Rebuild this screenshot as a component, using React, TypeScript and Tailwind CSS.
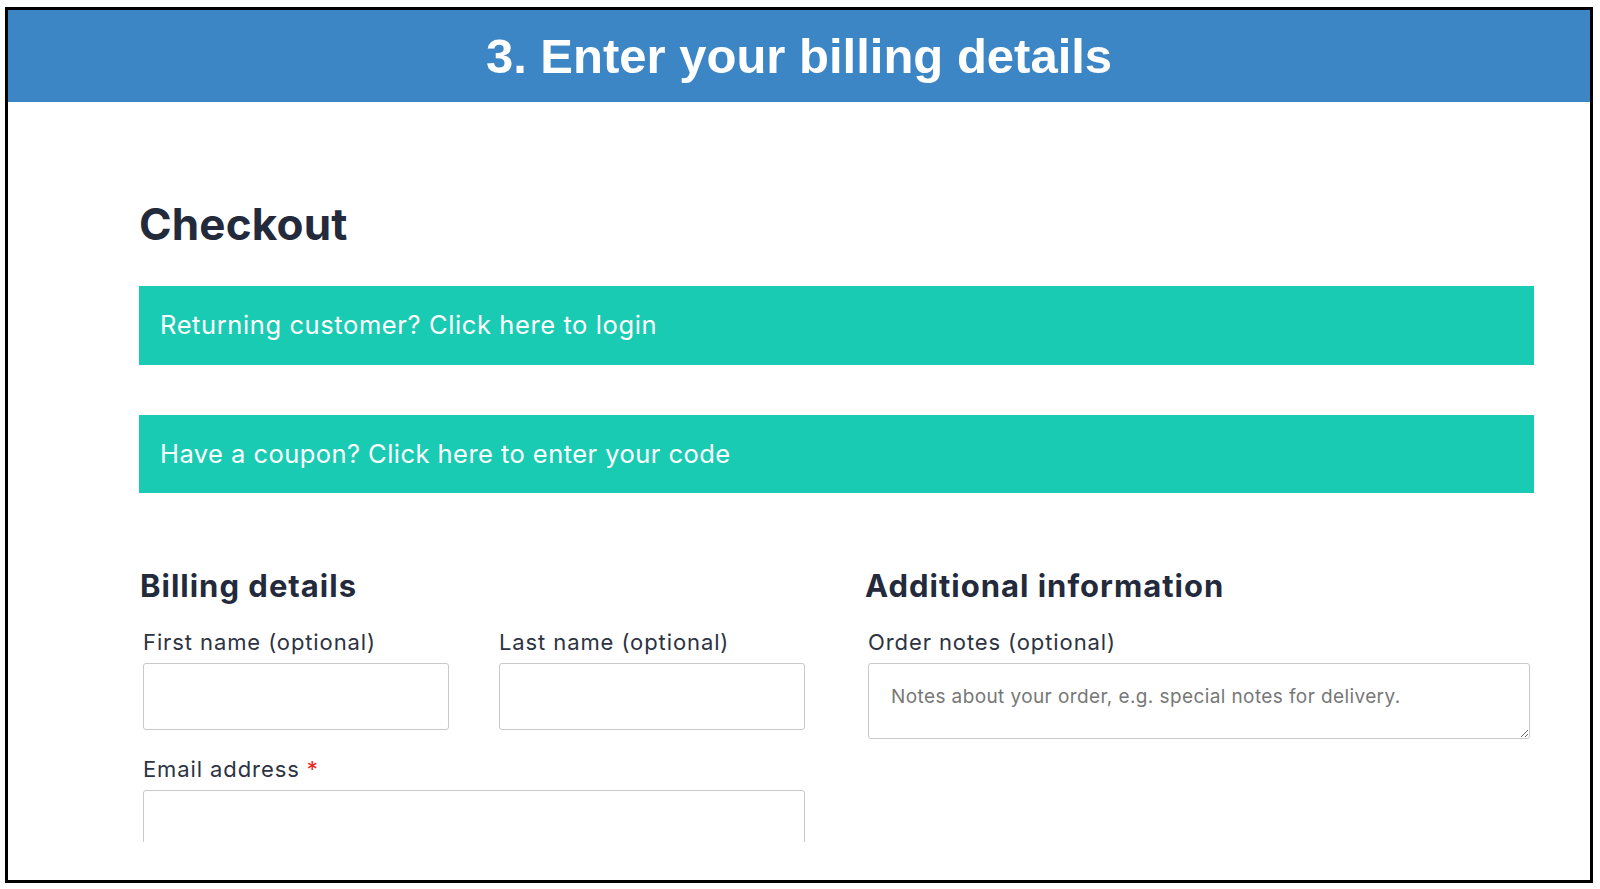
const Field = ({ label, required, className }: { label: string; required?: boolean; className?: string }) => (
  <div className={className}>
    <label className="block text-[22px] leading-[28px] tracking-[0.9px] text-[#2d3342]">
      {label}
      {required && <span className="ml-[7px] text-[#e8241c]">*</span>}
    </label>
    <input type="text" className="mt-[7px] block h-[67px] w-full rounded-[3px] border border-[#c9c9c9] bg-white px-4" />
  </div>
);

export default function App() {
  return (
    <div className="min-h-screen bg-white pl-[5px] pt-[7px]">
      <div className="flex h-[876px] w-[1588px] flex-col border-[3px] border-black bg-white">
        <header className="flex h-[92px] shrink-0 items-center justify-center bg-[#3c86c5]">
          <h1 className="font-['Liberation_Sans',Arial,sans-serif] text-[49px] font-bold leading-none text-white">
            3. Enter your billing details
          </h1>
        </header>

        <main className="h-[740px] shrink-0 overflow-hidden font-['Inter',sans-serif]">
          <div className="ml-[131px] w-[1395px]">
            <h2 className="mt-[97px] text-[44px] font-bold leading-[50px] tracking-[0.2px] text-[#232a3b]">Checkout</h2>

            <div className="mt-[37px] flex h-[79px] items-center bg-[#19cbb2] px-[21px] text-[25.5px] tracking-[0.6px] text-white">
              Returning customer? Click here to login
            </div>
            <div className="mt-[50px] flex h-[78px] items-center bg-[#19cbb2] px-[21px] text-[25.5px] tracking-[0.45px] text-white">
              Have a coupon? Click here to enter your code
            </div>

            <div className="mt-[75px] grid grid-cols-2 gap-x-[55px]">
              <section>
                <h3 className="pl-[1px] text-[31px] font-bold leading-[36px] tracking-[1px] text-[#232a3b]">Billing details</h3>
                <div className="mt-[24px] grid grid-cols-2 gap-x-[50px] px-[4px]">
                  <Field label="First name (optional)" />
                  <Field label="Last name (optional)" />
                  <Field label="Email address" required className="col-span-2 mt-[25px]" />
                </div>
              </section>

              <section>
                <h3 className="pl-[1px] text-[31px] font-bold leading-[36px] tracking-[1px] text-[#232a3b]">Additional information</h3>
                <div className="mt-[24px] px-[4px]">
                  <label className="block text-[22px] leading-[28px] tracking-[0.9px] text-[#2d3342]">Order notes (optional)</label>
                  <textarea
                    placeholder="Notes about your order, e.g. special notes for delivery."
                    className="mt-[7px] block h-[76px] w-full rounded-[3px] border border-[#c9c9c9] bg-white px-[22px] pt-[19px] text-[19px] leading-[28px] tracking-[0.4px] placeholder:text-[#777]"
                  />
                </div>
              </section>
            </div>
          </div>
        </main>
      </div>
    </div>
  );
}
